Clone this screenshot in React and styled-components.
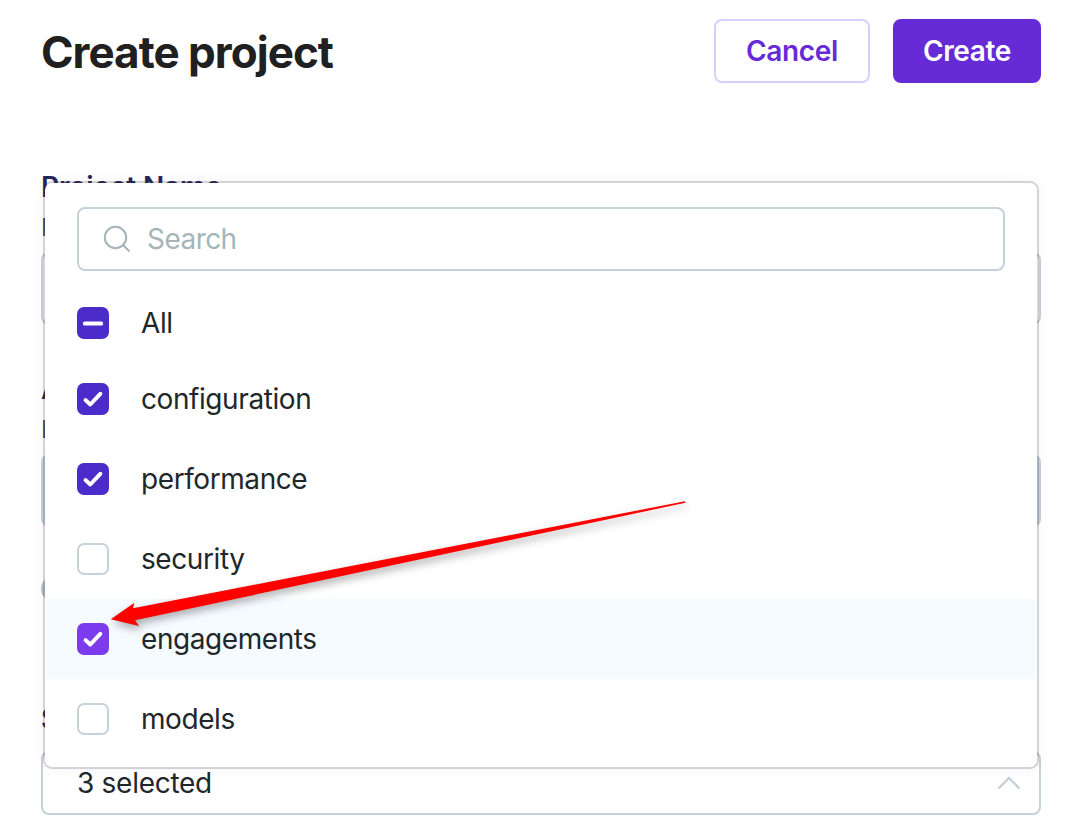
import React from "react";
import styled, { createGlobalStyle } from "styled-components";

const GlobalStyle = createGlobalStyle`
  *, *::before, *::after { box-sizing: border-box; }
  body {
    margin: 0;
    background: #fff;
    color: #1f272b;
    font-family: Inter, "Liberation Sans", sans-serif;
    overflow: hidden;
  }
`;

const Page = styled.main`
  position: relative;
  width: 1071px;
  height: 835px;
  padding: 19px 30px 0 41px;
  overflow: hidden;
`;

const Header = styled.header`
  display: flex;
  align-items: center;
  height: 64px;
  gap: 23px;
`;

const Title = styled.h1`
  flex: 1;
  margin: 0;
  padding-top: 1px;
  font-size: 44px;
  line-height: 64px;
  font-weight: 700;
  letter-spacing: -0.97px;
  color: #202020;
  white-space: nowrap;
`;

const Button = styled.button`
  width: ${(p) => (p.$primary ? 148 : 156)}px;
  height: 64px;
  padding: 0;
  border: 2px solid ${(p) => (p.$primary ? "#662bd6" : "#dacdf9")};
  border-radius: 8px;
  background: ${(p) => (p.$primary ? "#662bd6" : "#fff")};
  color: ${(p) => (p.$primary ? "#fff" : "#662bd6")};
  font-family: inherit;
  font-size: 28px;
  font-weight: 600;
  letter-spacing: -0.35px;
`;

const Form = styled.form`
  display: flex;
  flex-direction: column;
  margin-top: 87px;
`;

const Field = styled.div`
  display: flex;
  flex-direction: column;
  height: ${(p) => p.$height}px;
`;

const Label = styled.label`
  height: 41px;
  font-size: 28px;
  line-height: 34px;
  font-weight: 600;
  letter-spacing: -0.1px;
  color: #2b2459;
`;

const Hint = styled.span`
  height: 41px;
  font-size: 24px;
  line-height: 34px;
  color: #3f5079;
`;

const TextBox = styled.div`
  height: 73px;
  border: 2px solid #c4d2d9;
  border-radius: 8px;
  background: ${(p) => (p.$filled ? "#c4d2de" : "#fff")};
`;

const Toggle = styled.span`
  width: 44px;
  height: 26px;
  margin-top: 49px;
  border-radius: 13px;
  background: #b7c5ca;
`;

const Select = styled.div`
  display: flex;
  align-items: center;
  justify-content: space-between;
  height: 64px;
  margin-top: 8px;
  padding: 0 18px 0 34px;
  border: 2px solid #c4d2d9;
  border-radius: 8px;
  font-size: 28px;
`;

const Menu = styled.div`
  position: absolute;
  left: 43px;
  top: 181px;
  width: 996px;
  height: 588px;
  padding-top: 24px;
  border: 2px solid rgba(35, 30, 40, 0.19);
  border-radius: 9px;
  background: #fff;
  background-clip: padding-box;
  box-shadow: 0 0 14px rgba(70, 35, 140, 0.05);
`;

const Search = styled.div`
  display: flex;
  align-items: center;
  gap: 16px;
  height: 64px;
  margin: 0 32px 16px;
  padding-left: 24px;
  border: 2px solid #c4d2d9;
  border-radius: 8px;
  color: #a5b5ba;
  font-size: 28px;
`;

const Option = styled.div`
  display: flex;
  align-items: center;
  gap: 32px;
  height: ${(p) => (p.$short ? 72 : 80)}px;
  padding: 0 32px;
  background: ${(p) => (p.$active ? "#f6fbff" : "transparent")};
  font-size: 28px;
`;

const Box = styled.span`
  display: flex;
  width: 32px;
  height: 32px;
  border-radius: 7px;
  background: ${(p) => p.$color || "#fff"};
  border: ${(p) => (p.$color ? "0" : "2px solid #c4d2d9")};
`;

const Text = styled.span`
  letter-spacing: ${(p) => p.$spacing || -0.42}px;
`;

const Arrow = styled.svg`
  position: absolute;
  left: 0;
  top: 0;
  pointer-events: none;
  filter: drop-shadow(2px 4px 4px rgba(0, 0, 0, 0.32));
`;

const options = [
  { name: "All", state: "mixed" },
  { name: "configuration", state: "on" },
  { name: "performance", state: "on" },
  { name: "security", state: "off" },
  { name: "engagements", state: "on", active: true },
  { name: "models", state: "off" },
];

function Checkbox({ state, active }) {
  if (state === "off") return <Box />;
  return (
    <Box $color={active ? "#7c3cee" : "#4b2bc9"}>
      <svg width="32" height="32" viewBox="0 0 32 32" fill="none">
        {state === "mixed" ? (
          <rect x="6" y="14.4" width="20" height="4.2" rx="1.6" fill="#fff" />
        ) : (
          <path d="M8.6 17.1L13.3 21.5L23.3 10.8" stroke="#fff" strokeWidth="4" strokeLinecap="round" strokeLinejoin="round" />
        )}
      </svg>
    </Box>
  );
}

export default function App() {
  return (
    <>
      <GlobalStyle />
      <Page>
        <Header>
          <Title>Create project</Title>
          <Button>Cancel</Button>
          <Button $primary>Create</Button>
        </Header>
        <Form>
          <Field $height={202}>
            <Label>Project Name</Label>
            <Hint>E</Hint>
            <TextBox />
          </Field>
          <Field $height={330}>
            <Label>A</Label>
            <Hint>E</Hint>
            <TextBox $filled />
            <Toggle />
          </Field>
          <Field $height={113}>
            <Label>S</Label>
            <Select>
              <Text $spacing={-0.28}>3 selected</Text>
              <svg width="24" height="16" viewBox="0 0 24 16" fill="none" stroke="#c0ced5" strokeWidth="2">
                <path d="M1.5 13.5L12 3L22.5 13.5" />
              </svg>
            </Select>
          </Field>
        </Form>
        <Menu>
          <Search>
            <svg width="28" height="28" viewBox="0 0 28 28" fill="none" stroke="#a5b5ba" strokeWidth="2">
              <circle cx="12.5" cy="12.5" r="10.7" />
              <path d="M20 20L26.5 26.5" />
            </svg>
            <Text $spacing={-0.55}>Search</Text>
          </Search>
          {options.map((o) => (
            <Option key={o.name} $short={o.state === "mixed"} $active={o.active}>
              <Checkbox state={o.state} active={o.active} />
              <Text>{o.name}</Text>
            </Option>
          ))}
        </Menu>
        <Arrow width="1071" height="835" viewBox="0 0 1071 835">
          <path d="M110.7 619.3L134.4 602.7L133 608.3L685 501.2L685.5 502.7L135.2 620.3L139 626Z" fill="#f00" />
        </Arrow>
      </Page>
    </>
  );
}
